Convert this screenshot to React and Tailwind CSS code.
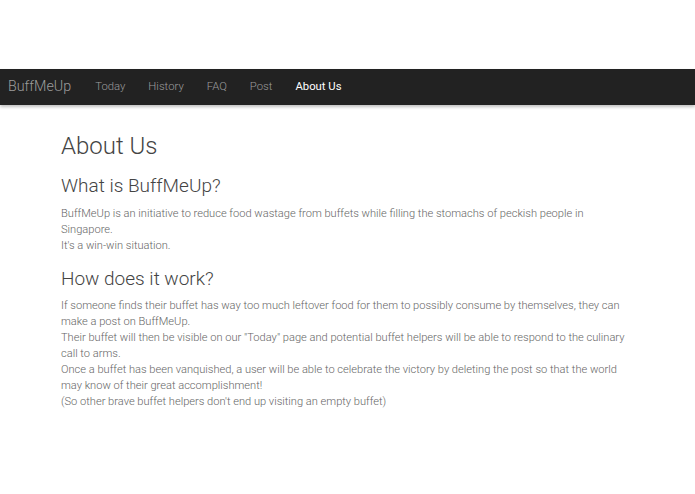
const links = ["Today", "History", "FAQ", "Post", "About Us"];

function Navbar() {
  return (
    <nav className="flex h-[36px] items-center bg-[#222222] shadow-[0_2px_3px_rgba(0,0,0,0.25)]">
      <a className="pl-[8px] pr-[24px] text-[14.3px] text-[#9d9d9d]">BuffMeUp</a>
      <ul className="flex gap-[23px] text-[11.3px]">
        {links.map((link) => (
          <li
            key={link}
            className={link === "About Us" ? "text-white font-normal" : "text-[#9d9d9d]"}
          >
            {link}
          </li>
        ))}
      </ul>
    </nav>
  );
}

export default function App() {
  return (
    <div
      className="min-h-[494px] bg-white font-light"
      style={{ fontFamily: "Roboto, 'Liberation Sans', sans-serif" }}
    >
      <div className="h-[69px]" />
      <Navbar />
      <main className="mx-auto w-[573px] pt-[26px] text-[#666]">
        <h1 className="text-[24px] leading-[30px] text-[#444]">About Us</h1>
        <h2 className="mt-[13px] text-[19px] leading-[24px] text-[#444]">What is BuffMeUp?</h2>
        <p className="mt-[8px] text-[11.1px] leading-[16px]">
          BuffMeUp is an initiative to reduce food wastage from buffets while filling the stomachs of peckish people in Singapore.
          <br />
          It's a win-win situation.
        </p>
        <h2 className="mt-[13px] text-[19px] leading-[24px] text-[#444]">How does it work?</h2>
        <p className="mt-[7px] text-[11.1px] leading-[16px]">
          If someone finds their buffet has way too much leftover food for them to possibly consume by themselves, they can make a post on BuffMeUp.
          <br />
          Their buffet will then be visible on our "Today" page and potential buffet helpers will be able to respond to the culinary call to arms.
          <br />
          Once a buffet has been vanquished, a user will be able to celebrate the victory by deleting the post so that the world may know of their great accomplishment!
          <br />
          (So other brave buffet helpers don't end up visiting an empty buffet)
        </p>
      </main>
    </div>
  );
}
